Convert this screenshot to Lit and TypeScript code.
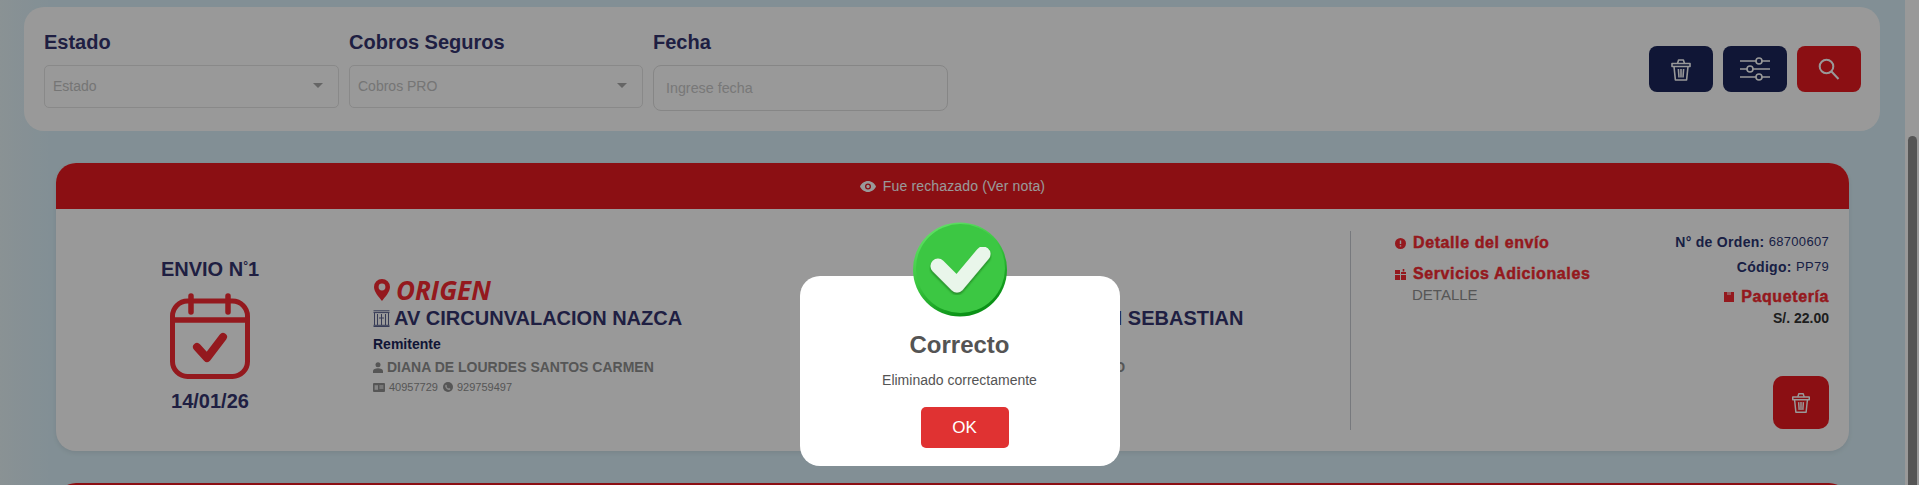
import { LitElement, html, css, svg } from "lit";
import { customElement } from "lit/decorators.js";

const trash = svg`<g fill="none" stroke="currentColor" stroke-width="1.6" stroke-linejoin="round"><path d="M3 6.500h18v3H3z"/><path d="M8.500 6.500 9.600 3h4.800l1.100 3.500"/><path d="M5 9.500 6.400 23h11.200L19 9.500"/><path d="M9.400 12 10 20.500M12 12v8.500M14.600 12 14 20.500"/></g>`;

@customElement("app-root")
export class AppRoot extends LitElement {
  static styles = css`
    :host { display: block; height: 485px; overflow: hidden; position: relative; font-family: "Liberation Sans", Arial, sans-serif; }
    * { box-sizing: border-box; }
    svg { display: block; flex: none; }
    .shell { display: flex; height: 485px; }
    .page { flex: 1; min-width: 0; height: 485px; overflow: hidden; padding-top: 7px; background: linear-gradient(90deg, #e6f3f7 0, #d9eff8 50px, #d9eff8 100%); }
    .scrollbar { width: 14px; background: #fff; padding: 136px 2px 0 3px; }
    .thumb { height: 400px; border-radius: 5px; background: #8e8e8e; }

    .filters { margin: 0 25px 0 24px; height: 124px; background: #fff; border-radius: 20px; padding: 22px 19px 0 20px; display: flex; justify-content: space-between; }
    .fields { display: grid; grid-template-columns: 295px 294px 295px; column-gap: 10px; }
    .label { font-size: 20px; line-height: 26px; font-weight: 700; color: #35356f; margin-bottom: 10px; }
    .select { height: 43px; border: 1px solid #e4e4e4; border-radius: 5px; display: flex; align-items: center; justify-content: space-between; padding: 0 15px 2px 8px; font-size: 14px; color: #c4c4c4; }
    .caret { width: 0; height: 0; border-left: 5px solid transparent; border-right: 5px solid transparent; border-top: 5px solid #a8a8a8; }
    .input { height: 46px; border: 1px solid #e0e0e0; border-radius: 8px; display: flex; align-items: center; padding: 0 12px; font-size: 14.3px; color: #c8c8c8; }
    .actions { display: flex; gap: 10px; padding-top: 17px; }
    .btn { width: 64px; height: 46px; border-radius: 8px; display: flex; align-items: center; justify-content: center; color: #fff; }
    .navy { background: #1b265a; }
    .red { background: #e81920; }

    .card { margin: 32px 56px 0 56px; height: 288px; background: #fff; border-radius: 20px; overflow: hidden; box-shadow: 0 2px 5px rgba(0,0,0,.08); }
    .banner { height: 46px; background: #e81920; color: #fff; font-size: 14px; display: flex; align-items: center; justify-content: center; gap: 7px; letter-spacing: .15px; }
    .body { height: 242px; padding: 22px 20px 21px 0; display: flex; }

    .envio { width: 308px; text-align: center; display: flex; flex-direction: column; align-items: center; padding-top: 26px; color: #35356f; font-weight: 700; font-size: 20px; }
    .envio .t { line-height: 24px; margin-bottom: 12px; }
    .envio .d { line-height: 24px; margin-top: 10px; }
    .envio sup { font-size: 12px; line-height: 0; vertical-align: 6px; }
    .place { width: 596px; padding: 45px 0 0 9px; }
    .dest { width: 390px; padding-left: 5px; }
    .head { display: flex; align-items: center; gap: 5px; height: 27px; color: #f72b32; font-family: "Open Sans", sans-serif; font-style: italic; font-weight: 700; font-size: 26px; }
    .addr { display: flex; align-items: center; gap: 4px; height: 30px; color: #35356f; font-weight: 700; font-size: 20px; white-space: nowrap; }
    .role { color: #1b265a; font-weight: 700; font-size: 14px; line-height: 20px; margin-top: 1px; }
    .who { display: flex; align-items: center; gap: 4px; color: #8f8f8f; font-weight: 700; font-size: 14px; line-height: 20px; margin-top: 3px; white-space: nowrap; }
    .ids { display: flex; align-items: center; gap: 4px; color: #8f8f8f; font-size: 11px; line-height: 18px; margin-top: 1px; }
    .ids span { margin-right: 1px; }

    .detail { flex: 1; border-left: 1px solid #c6cad0; padding: 0 0 0 44px; display: flex; justify-content: space-between; }
    .dl { padding-top: 2px; }
    .rd { display: flex; align-items: center; gap: 7px; color: #f72b32; font-weight: 700; font-size: 16px; line-height: 20px; letter-spacing: .6px; -webkit-text-stroke: .45px currentColor; white-space: nowrap; }
    .rd + .rd { margin-top: 11px; }
    .sub { color: #8f8f8f; font-size: 15px; line-height: 20px; margin: 1px 0 0 17px; }
    .dr { display: flex; flex-direction: column; align-items: flex-end; }
    .kv { color: #2a3472; font-weight: 700; font-size: 14px; line-height: 22px; letter-spacing: .3px; white-space: nowrap; }
    .kv span { font-weight: 400; font-size: 13px; vertical-align: 1px; }
    .kv + .kv { margin-top: 3px; }
    .dr .rd { margin-top: 9px; justify-content: flex-end; }
    .price { color: #333; font-weight: 700; font-size: 14px; line-height: 18px; margin-top: 2px; }
    .del { margin: auto 0 1px; width: 56px; height: 53px; border-radius: 10px; background: #e81920; color: #fff; display: flex; align-items: center; justify-content: center; }

    .overlay { position: absolute; inset: 0; background: rgba(0,0,0,.4); display: flex; justify-content: center; padding-top: 276px; }
    .modal { width: 320px; height: 190px; background: #fff; border-radius: 20px; display: flex; flex-direction: column; align-items: center; color: #545454; }
    .check { margin-top: -54px; }
    .title { font-weight: 700; font-size: 24px; line-height: 28px; margin-top: 14px; }
    .msg { font-size: 14px; line-height: 18px; margin-top: 12px; }
    .ok { margin-top: 18px; margin-left: 10px; width: 88px; height: 41px; border: 0; border-radius: 5px; background: #e03232; color: #fff; font: 17px "Liberation Sans", Arial, sans-serif; padding: 0; display: flex; align-items: center; justify-content: center; }
  `;

  private pin() {
    return html`<svg width="18" height="22" viewBox="0 0 18 22"><path fill-rule="evenodd" d="M9 0a8 8 0 0 1 8 8c0 5-5 10-8 14C6 18 1 13 1 8a8 8 0 0 1 8-8Zm0 4.600a3.400 3.400 0 1 0 0 6.800 3.400 3.400 0 0 0 0-6.800Z" fill="#f72b32"/></svg>`;
  }
  private building() {
    return html`<svg width="17" height="17" viewBox="0 0 17 17" fill="none" stroke="#5a6390" stroke-width="1"><path d="M.5 .8h16M.5 2.600h16M.5 15.300h16M.5 16.500h16"/><path d="M1.500 3v12M15.500 3v12M4.500 4v11M8.500 4v11M12.500 4v11M6 8h5"/></svg>`;
  }
  private person() {
    return html`<svg width="10" height="11" viewBox="0 0 10 11" fill="#8f8f8f"><circle cx="5" cy="2.800" r="2.500"/><path d="M0 11V9c0-2 2.500-2.800 5-2.800S10 7 10 9v2Z"/></svg>`;
  }
  private idCard() {
    return html`<svg width="12" height="9" viewBox="0 0 12 9"><rect width="12" height="9" rx="1" fill="#8f8f8f"/><rect x="1.600" y="2.200" width="3.400" height="4.600" fill="#fff" opacity=".7"/><path d="M6.400 3h4M6.400 5h4" stroke="#fff" stroke-width="1"/></svg>`;
  }
  private phone() {
    return html`<svg width="10" height="10" viewBox="0 0 10 10"><circle cx="5" cy="5" r="5" fill="#8f8f8f"/><path d="M3 2.400 4.200 4l-.6.700c.4.800 1 1.400 1.800 1.800L6 5.800 7.600 7c-.5 1-1.300 1.200-2 .9C4 7.300 2.700 6 2.200 4.400 2 3.600 2.300 2.900 3 2.400Z" fill="#fff" opacity=".75"/></svg>`;
  }
  private place(title: string, addr: string, role: string, who: string, doc: string, tel: string, cls = "") {
    return html`<div class="place ${cls}">
      <div class="head">${this.pin()}<span>${title}</span></div>
      <div class="addr">${this.building()}<span>${addr}</span></div>
      <div class="role">${role}</div>
      <div class="who">${this.person()}<span>${who}</span></div>
      <div class="ids">${this.idCard()}<span>${doc}</span>${this.phone()}<span>${tel}</span></div>
    </div>`;
  }

  render() {
    return html`
      <div class="shell">
        <div class="page">
          <section class="filters">
            <div class="fields">
              <div><div class="label">Estado</div><div class="select"><span>Estado</span><i class="caret"></i></div></div>
              <div><div class="label">Cobros Seguros</div><div class="select"><span>Cobros PRO</span><i class="caret"></i></div></div>
              <div><div class="label">Fecha</div><div class="input">Ingrese fecha</div></div>
            </div>
            <div class="actions">
              <div class="btn navy"><svg width="24" height="24" viewBox="0 0 24 24">${trash}</svg></div>
              <div class="btn navy"><svg width="32" height="24" viewBox="0 0 32 24" fill="none" stroke="currentColor" stroke-width="1.6"><path d="M1 4h16M23 4h8M1 12h7M14 12h17M1 20h16M23 20h8"/><circle cx="20" cy="4" r="3"/><circle cx="11" cy="12" r="3"/><circle cx="20" cy="20" r="3"/></svg></div>
              <div class="btn red"><svg width="22" height="22" viewBox="0 0 22 22" fill="none" stroke="currentColor" stroke-width="2"><circle cx="8.500" cy="8.500" r="6.800"/><path d="M13.500 13.500 20.500 21"/></svg></div>
            </div>
          </section>

          <article class="card">
            <div class="banner"><svg width="16" height="11" viewBox="0 0 16 11"><path fill-rule="evenodd" d="M8 0c3.500 0 6.500 2.300 8 5.500C14.500 8.700 11.500 11 8 11S1.500 8.700 0 5.500C1.500 2.300 4.500 0 8 0Zm0 2.500a3 3 0 1 0 0 6 3 3 0 0 0 0-6Zm0 1.300a1.700 1.700 0 1 1 0 3.400 1.700 1.700 0 0 1 0-3.400Z" fill="currentColor"/></svg><span>Fue rechazado (Ver nota)</span></div>
            <div class="body">
              <div class="envio">
                <div class="t">ENVIO N<sup>°</sup>1</div>
                <svg width="80" height="86" viewBox="0 0 80 86" fill="none" stroke="#f72b32"><rect x="2.500" y="8" width="75" height="75.500" rx="15" stroke-width="5"/><path d="M2.500 27h75" stroke-width="5.500"/><path d="M21 3v16M58 3v16" stroke-width="5.500" stroke-linecap="round"/><path d="M27 54l10 11 16-21" stroke-width="8" stroke-linecap="round" stroke-linejoin="round"/></svg>
                <div class="d">14/01/26</div>
              </div>
              ${this.place("ORIGEN", "AV CIRCUNVALACION NAZCA", "Remitente", "DIANA DE LOURDES SANTOS CARMEN", "40957729", "929759497")}
              ${this.place("DESTINO", "AV DON JUAN SEBASTIAN", "Destinatario", "ANDRES RUIZ MARIO", "40957730", "929759498", "dest")}
              <div class="detail">
                <div class="dl">
                  <div class="rd"><svg width="11" height="11" viewBox="0 0 11 11"><circle cx="5.500" cy="5.500" r="5.500" fill="#f72b32"/><path d="M5.500 2.500v3.500M5.500 7.300v1.200" stroke="#fff" stroke-width="1.400"/></svg><span>Detalle del envío</span></div>
                  <div class="rd"><svg width="11" height="11" viewBox="0 0 11 11" fill="#f72b32"><path d="M0 1h5v4H0zM0 6h5v5H0zM6 6h5v5H6zM6 3h5v2H6zM7.700 0h1.600v2.500H7.700z"/></svg><span>Servicios Adicionales</span></div>
                  <div class="sub">DETALLE</div>
                </div>
                <div class="dr">
                  <div class="kv">N° de Orden: <span>68700607</span></div>
                  <div class="kv">Código: <span>PP79</span></div>
                  <div class="rd"><svg width="10" height="10" viewBox="0 0 10 10"><path d="M0 0h10v10H0z" fill="#f72b32"/><path d="M3.500 0h1v3h-1zM5.500 0h1v3h-1z" fill="#fff"/></svg><span>Paquetería</span></div>
                  <div class="price">S/. 22.00</div>
                  <div class="del"><svg width="22" height="26" viewBox="0 0 24 26">${trash}</svg></div>
                </div>
              </div>
            </div>
          </article>
          <article class="card"><div class="banner"></div></article>
        </div>
        <div class="scrollbar"><div class="thumb"></div></div>
      </div>
      <div class="overlay">
        <div class="modal" role="dialog">
          <svg class="check" width="94" height="95" viewBox="0 0 94 95">
            <defs>
              <linearGradient id="rim" x1="0" y1="0" x2=".5" y2="1"><stop offset="0" stop-color="#6be86f"/><stop offset=".55" stop-color="#39c63f"/><stop offset="1" stop-color="#0a9116"/></linearGradient>
              <filter id="sh" x="-20%" y="-20%" width="140%" height="150%"><feDropShadow dx="0" dy="2" stdDeviation="1.200" flood-color="#0c5a14" flood-opacity=".6"/></filter>
            </defs>
            <circle cx="47" cy="47.500" r="47" fill="url(#rim)"/>
            <circle cx="47.500" cy="46.500" r="44.500" fill="#3cc743"/>
            <path d="M25 44 44 63 70 32" fill="none" stroke="#e9f6ea" stroke-width="15" stroke-linecap="round" stroke-linejoin="round" filter="url(#sh)"/>
          </svg>
          <div class="title">Correcto</div>
          <div class="msg">Eliminado correctamente</div>
          <button class="ok">OK</button>
        </div>
      </div>`;
  }
}
